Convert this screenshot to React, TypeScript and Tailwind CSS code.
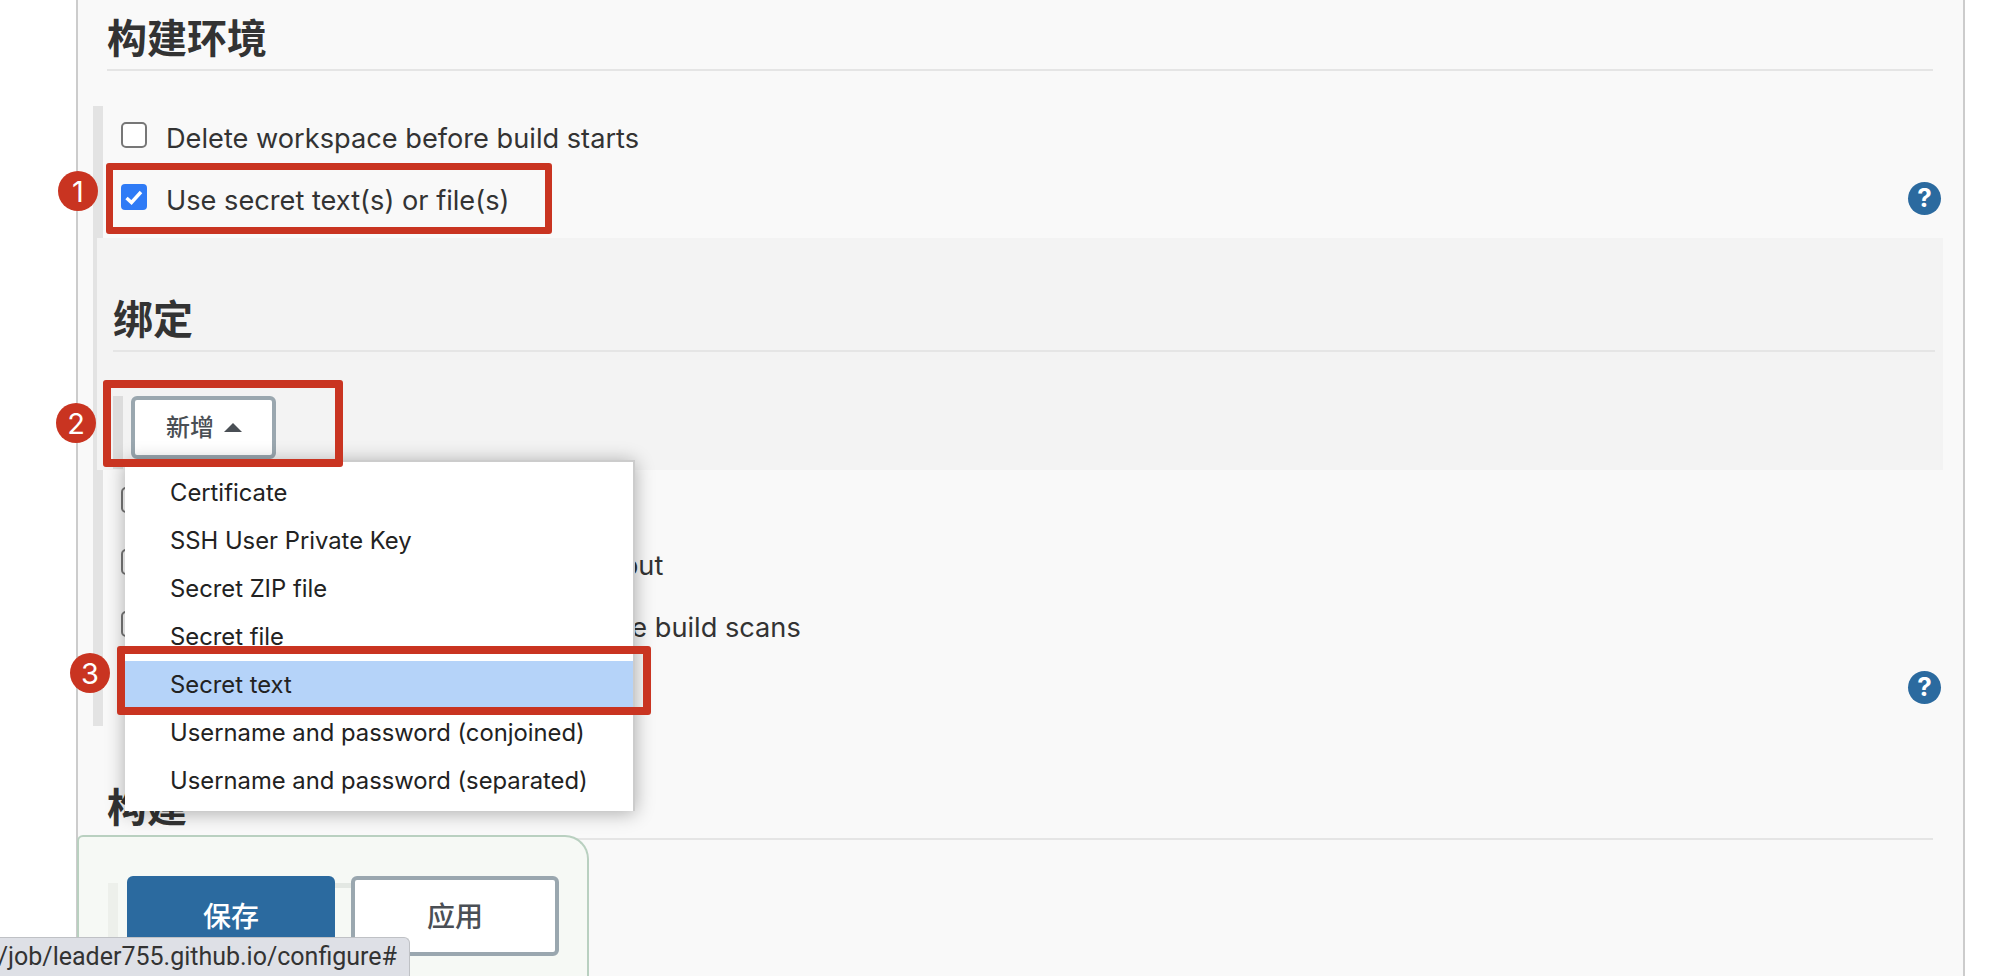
const font = "font-['Inter','Noto_Sans_CJK_SC',sans-serif]";

function HelpIcon() {
  return (
    <div className="w-[33px] h-[33px] rounded-full bg-[#2b6a9f] flex items-center justify-center text-white text-[26px] font-bold leading-none">
      ?
    </div>
  );
}

function CheckRow({ label, checked, help }: { label: string; checked?: boolean; help?: boolean }) {
  return (
    <div className="flex items-center h-[62px] pl-[18px] pr-[2px]">
      {checked ? (
        <div className="mb-[6px] w-[26px] h-[26px] rounded-[4px] bg-[#2f7bf6] flex items-center justify-center shrink-0">
          <svg width="20" height="20" viewBox="0 0 20 20" fill="none">
            <path d="M2.5 11 7.5 15.5 17 5" stroke="#fff" strokeWidth="3.4" />
          </svg>
        </div>
      ) : (
        <div className="mb-[6px] w-[26px] h-[26px] rounded-[5px] border-2 border-[#777] bg-white shrink-0" />
      )}
      <span className="ml-[19px] pt-[2px] text-[27.2px] text-[#333]">{label}</span>
      {help && (
        <div className="ml-auto mb-[4px]">
          <HelpIcon />
        </div>
      )}
    </div>
  );
}

const MENU_ITEMS = [
  "Certificate",
  "SSH User Private Key",
  "Secret ZIP file",
  "Secret file",
  "Secret text",
  "Username and password (conjoined)",
  "Username and password (separated)",
];

function Badge({ n, className }: { n: number; className: string }) {
  return (
    <div className={`absolute w-10 h-10 rounded-full bg-[#c93421] flex items-center justify-center text-white text-[29px] leading-none ${className}`}>
      {n}
    </div>
  );
}

export default function App() {
  return (
    <div className={`relative w-[2006px] h-[976px] overflow-hidden bg-white ${font}`}>
      {/* 설정 패널 */}
      <div className="ml-[76px] w-[1889px] h-[976px] border-x-2 border-[#cccccc] bg-[#f9f9f9]">
        <div className="pl-[29px] pr-[30px]">
          <div className="h-[71px] border-b-2 border-[#e5e5e5] text-[40px] font-semibold leading-[78px] text-[#333]">
            构建环境
          </div>
        </div>

        <div className="mt-[35px] ml-[15px] mr-[20px] border-l-[10px] border-[#e3e3e3] h-[620px]">
          <div className="pt-[1px]">
            <CheckRow label="Delete workspace before build starts" />
            <CheckRow label="Use secret text(s) or file(s)" checked help />
          </div>

          <div className="-ml-[6px] mt-[7px] h-[232px] bg-[#f3f3f3] pl-[16px] pr-[8px]">
            <div className="h-[114px] border-b-2 border-[#e5e5e5] pt-[52px] text-[40px] font-semibold leading-[60px] text-[#333]">
              绑定
            </div>
            <div className="mt-[44px] h-[73px] border-l-[10px] border-[#dcdcdc] pl-[8px]">
              <button className="flex items-center w-[145px] h-[63px] pl-[31px] rounded-[6px] border-4 border-[#9aa7af] bg-white text-[24px] font-medium text-[#4a4f55]">
                新增
                <svg className="ml-[10px]" width="18" height="9" viewBox="0 0 18 9">
                  <path d="M9 0 18 9H0Z" fill="#4a4f55" />
                </svg>
              </button>
            </div>
          </div>

          <div className="pt-[2px]">
            <CheckRow label="Abort the build if it's stuck" />
            <CheckRow label="Add timestamps to the Console Output" />
            <CheckRow label="Inspect build log for published Gradle build scans" />
            <CheckRow label="With Ant" help />
          </div>
        </div>

        <div className="mt-[52px] pl-[29px] pr-[30px]">
          <div className="h-[62px] border-b-2 border-[#e5e5e5] text-[40px] font-semibold leading-[60px] text-[#333]">
            构建
          </div>
        </div>
      </div>

      {/* 하단 저장 바 */}
      <div className="absolute left-[77px] top-[835px] w-[512px] h-[141px] flex pl-[29px] pt-[39px] rounded-tl-[6px] rounded-tr-[24px] border-2 border-b-0 border-[#b9d0c0] bg-[#f6f9f4]/95">
        <div className="w-[10px] mt-[7px] bg-[#edf0eb]" />
        <div className="relative ml-[9px] flex items-start gap-[16px]">
          <div className="absolute left-[200px] top-[7px] w-[30px] h-[5px] bg-[#e3e8e3]" />
          <button className="relative w-[208px] h-[80px] pt-[2px] rounded-[6px] bg-[#2b6a9f] text-[28px] font-medium text-white">保存</button>
          <button className="relative w-[208px] h-[80px] pt-[2px] rounded-[6px] border-4 border-[#9aa7af] bg-white text-[28px] font-medium text-[#4a4f55]">应用</button>
        </div>
      </div>

      {/* 드롭다운 메뉴 */}
      <div className="absolute left-[125px] top-[460px] w-[510px] h-[351px] border-t-2 border-r-2 border-[#cccccc] bg-white pt-[7px] shadow-[0_2px_18px_rgba(0,0,0,0.32)]">
        {MENU_ITEMS.map((item) => (
          <div
            key={item}
            className={`h-[48px] pl-[45px] text-[23.8px] leading-[48px] text-[#222] ${item === "Secret text" ? "bg-[#b5d3f9]" : ""}`}
          >
            {item}
          </div>
        ))}
      </div>

      {/* 빨간 표시 상자 */}
      <div className="absolute left-[106px] top-[163px] w-[446px] h-[71px] rounded-[3px] border-[7px] border-[#c93421]" />
      <div className="absolute left-[103px] top-[380px] w-[240px] h-[87px] rounded-[3px] border-[8px] border-[#c93421]" />
      <div className="absolute left-[117px] top-[646px] w-[534px] h-[69px] rounded-[3px] border-[8px] border-[#c93421]" />
      <Badge n={1} className="left-[58px] top-[171px]" />
      <Badge n={2} className="left-[56px] top-[403px]" />
      <Badge n={3} className="left-[70px] top-[653px]" />

      {/* 상태 표시줄 */}
      <div className="absolute left-0 bottom-0 w-[410px] h-[39px] rounded-tr-[6px] border-t border-r border-[#bfc1c5] bg-[#dee0e6] flex items-center justify-end pr-[12px] overflow-hidden">
        <span className="whitespace-nowrap text-[25px] text-[#333] font-['Roboto',sans-serif]">
          /job/leader755.github.io/configure#
        </span>
      </div>
    </div>
  );
}
